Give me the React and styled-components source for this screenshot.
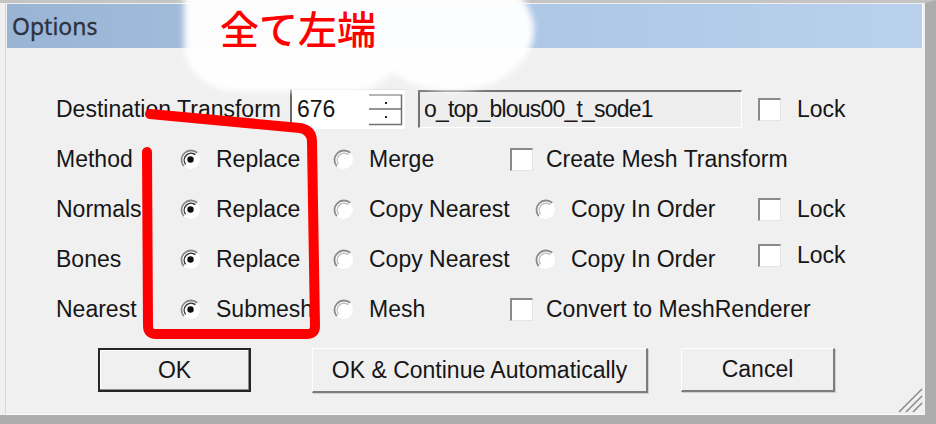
import React from "react";
import styled, { createGlobalStyle } from "styled-components";

const GlobalStyle = createGlobalStyle`
  html, body {
    margin: 0;
    padding: 0;
    background: #f0f0f0;
  }
  body {
    font-family: "Liberation Sans", Arial, sans-serif;
  }
`;

const Page = styled.div`
  position: relative;
  width: 936px;
  height: 424px;
  overflow: hidden;
`;

const Frame = styled.div`
  width: 100%;
  height: 100%;
  box-sizing: border-box;
  background: #f0f0f0;
  border-top: 3px solid #c4c4c4;
  border-right: 11px solid #adadad;
  border-bottom: 9px solid #adadad;
`;

const Window = styled.div`
  position: relative;
  height: 100%;
  box-sizing: border-box;
  margin-left: 5px;
  padding-top: 1px;
  border-left: 1px solid #d8d8d8;
  border-bottom: 1px solid #fafafa;
`;

const TitleBar = styled.div`
  display: flex;
  align-items: center;
  height: 44px;
  margin: 0 3px 0 1px;
  padding-left: 5px;
  background: linear-gradient(90deg, #9ab4d5 0%, #abc5e4 50%, #b9d1ec 100%);
  box-shadow: 1px 0 0 #fbfbfb;
`;

const Title = styled.span`
  font-family: "Noto Sans", "Liberation Sans", sans-serif;
  font-size: 23px;
  color: #2c323e;
  -webkit-text-stroke: 0.3px #2c323e;
`;

const Body = styled.div`
  display: flex;
  flex-direction: column;
  padding: 41px 0 0 50px;
`;

const Rows = styled.div`
  display: flex;
  flex-direction: column;
  gap: 10px;
`;

const Row = styled.div`
  display: flex;
  align-items: center;
  height: 40px;
`;

const Cell = styled.div`
  display: flex;
  align-items: center;
  flex: none;
  width: ${(p) => (p.$w ? `${p.$w}px` : "auto")};
  margin-left: ${(p) => p.$ml || 0}px;
  margin-bottom: ${(p) => p.$raise || 0}px;
`;

const Text = styled.span`
  font-size: 23px;
  color: #161616;
  white-space: nowrap;
  margin-left: ${(p) => p.$gap || 0}px;
  letter-spacing: ${(p) => p.$ls || 0}px;
`;

const Box = styled.span`
  display: inline-block;
  flex: none;
  width: 20px;
  height: 20px;
  background: #ffffff;
  border-top: 2px solid #8a8a8a;
  border-left: 2px solid #8a8a8a;
  border-right: 1px solid #e4e4e4;
  border-bottom: 1px solid #e4e4e4;
`;

const SpinField = styled.div`
  display: flex;
  align-items: center;
  justify-content: space-between;
  width: 115px;
  height: 40px;
  box-sizing: border-box;
  padding: 0 2px 0 5px;
  background: #ffffff;
  border-left: 2px solid #6a6a6a;
  border-top: 1px solid #e2e2e2;
`;

const ReadOnlyField = styled.div`
  display: flex;
  align-items: center;
  width: 324px;
  height: 38px;
  margin-left: 13px;
  box-sizing: border-box;
  padding-left: 4px;
  background: #eeeeee;
  border-top: 2px solid #747474;
  border-left: 2px solid #747474;
  border-right: 1px solid #ffffff;
  border-bottom: 1px solid #ffffff;
`;

const ButtonRow = styled.div`
  display: flex;
  margin: 19px 0 0 42px;
`;

const Button = styled.div`
  display: flex;
  align-items: center;
  justify-content: center;
  flex: none;
  box-sizing: border-box;
  width: ${(p) => p.$w}px;
  height: ${(p) => p.$h || 44}px;
  margin-left: ${(p) => p.$ml || 0}px;
  font-size: 23px;
  color: #161616;
  background: #f0f0f0;
  ${(p) =>
    p.$default
      ? `border: 2px solid #262626; box-shadow: inset -1px -1px 0 #8a8a8a, inset 1px 1px 0 #ffffff;`
      : `border-top: 1px solid #ffffff; border-left: 1px solid #ffffff;
         border-right: 2px solid #7c7c7c; border-bottom: 2px solid #7c7c7c;
         box-shadow: 1px 1px 0 #cfcfcf;`}
`;

const Grip = styled.svg`
  position: absolute;
  right: 2px;
  bottom: 1px;
`;

const Overlay = styled.svg`
  position: absolute;
  left: 0;
  top: 0;
  pointer-events: none;
`;

const Note = styled.div`
  position: absolute;
  left: 220px;
  top: 7px;
  font-family: "Noto Sans CJK JP", "Noto Sans", sans-serif;
  font-size: 39px;
  line-height: 40px;
  font-weight: 500;
  color: #ff0000;
  white-space: nowrap;
`;

const Radio = ({ checked }) => (
  <svg width="21" height="21" viewBox="0 0 21 21" style={{ flex: "none" }}>
    <circle cx="10.5" cy="10.5" r="9.5" fill="#ffffff" />
    <path d="M17.2 3.8 A9.5 9.5 0 0 0 3.8 17.2" stroke="#8a8a8a" strokeWidth="1.8" fill="none" />
    <path d="M15.4 5.6 A7 7 0 0 0 5.6 15.4" stroke={checked ? "#2e2e2e" : "#bdbdbd"} strokeWidth="1.4" fill="none" />
    {checked && <circle cx="10.5" cy="10.5" r="3.2" fill="#0e0e0e" />}
  </svg>
);

const Option = ({ w, checked, label }) => (
  <Cell $w={w}>
    <Radio checked={checked} />
    <Text $gap={15}>{label}</Text>
  </Cell>
);

const Check = ({ label, ml, raise, gap = 15 }) => (
  <Cell $ml={ml} $raise={raise}>
    <Box />
    <Text $gap={gap}>{label}</Text>
  </Cell>
);

const Spinner = () => (
  <svg width="34" height="32" viewBox="0 0 34 32">
    <line x1="0" y1="1" x2="33" y2="1" stroke="#9c9c9c" strokeWidth="1.5" />
    <line x1="0" y1="15" x2="33" y2="15" stroke="#707070" strokeWidth="1.5" />
    <line x1="0" y1="17" x2="33" y2="17" stroke="#ffffff" strokeWidth="1" />
    <line x1="0" y1="30.5" x2="33" y2="30.5" stroke="#707070" strokeWidth="1.5" />
    <line x1="32.5" y1="1" x2="32.5" y2="31" stroke="#707070" strokeWidth="1.5" />
    <rect x="16" y="8" width="2" height="2" fill="#222" />
    <rect x="16" y="22" width="2" height="2" fill="#222" />
  </svg>
);

export default function App() {
  return (
    <Page>
      <GlobalStyle />
      <Frame>
        <Window>
          <TitleBar>
            <Title>Options</Title>
          </TitleBar>
          <Body>
            <Rows>
              <Row>
                <Cell $w={234}>
                  <Text>Destination Transform</Text>
                </Cell>
                <SpinField>
                  <Text>676</Text>
                  <Spinner />
                </SpinField>
                <ReadOnlyField>
                  <Text $ls={-0.8}>o_top_blous00_t_sode1</Text>
                </ReadOnlyField>
                <Check label="Lock" ml={16} gap={16} />
              </Row>
              <Row>
                <Cell $w={124}>
                  <Text>Method</Text>
                </Cell>
                <Option w={153} checked label="Replace" />
                <Option w={177} label="Merge" />
                <Check label="Create Mesh Transform" gap={13} />
              </Row>
              <Row>
                <Cell $w={124}>
                  <Text>Normals</Text>
                </Cell>
                <Option w={153} checked label="Replace" />
                <Option w={202} label="Copy Nearest" />
                <Option w={223} label="Copy In Order" />
                <Check label="Lock" gap={16} />
              </Row>
              <Row>
                <Cell $w={124}>
                  <Text>Bones</Text>
                </Cell>
                <Option w={153} checked label="Replace" />
                <Option w={202} label="Copy Nearest" />
                <Option w={223} label="Copy In Order" />
                <Check label="Lock" gap={16} raise={8} />
              </Row>
              <Row>
                <Cell $w={124}>
                  <Text>Nearest</Text>
                </Cell>
                <Option w={153} checked label="Submesh" />
                <Option w={177} label="Mesh" />
                <Check label="Convert to MeshRenderer" gap={13} />
              </Row>
            </Rows>
            <ButtonRow>
              <Button $w={153} $default>OK</Button>
              <Button $w={336} $h={45} $ml={61}>OK &amp; Continue Automatically</Button>
              <Button $w={154} $ml={33}>Cancel</Button>
            </ButtonRow>
          </Body>
          <Grip width="28" height="30" viewBox="0 0 28 30">
            <line x1="27" y1="6" x2="4" y2="29" stroke="#8c8c8c" strokeWidth="1.6" />
            <line x1="27" y1="13" x2="11" y2="29" stroke="#8c8c8c" strokeWidth="1.6" />
            <line x1="27" y1="20" x2="18" y2="29" stroke="#8c8c8c" strokeWidth="1.6" />
          </Grip>
        </Window>
      </Frame>

      <Overlay width="936" height="424" viewBox="0 0 936 424">
        <defs>
          <filter id="soft" x="-20%" y="-20%" width="140%" height="140%">
            <feGaussianBlur stdDeviation="3" />
          </filter>
        </defs>
        <g filter="url(#soft)" fill="#ffffff" opacity="0.97">
          <rect x="184" y="-60" width="218" height="151" rx="52" ry="46" />
          <ellipse cx="452" cy="30" rx="82" ry="61" />
        </g>
        <path
          d="M150 114 L300 128 Q312 130 312 142 L315 326 Q315 334 307 334 L156 334 Q148 334 148 326 L147 152"
          stroke="#ff0000"
          strokeWidth="10"
          strokeLinecap="round"
          strokeLinejoin="round"
          fill="none"
        />
      </Overlay>
      <Note>全て左端</Note>
    </Page>
  );
}
